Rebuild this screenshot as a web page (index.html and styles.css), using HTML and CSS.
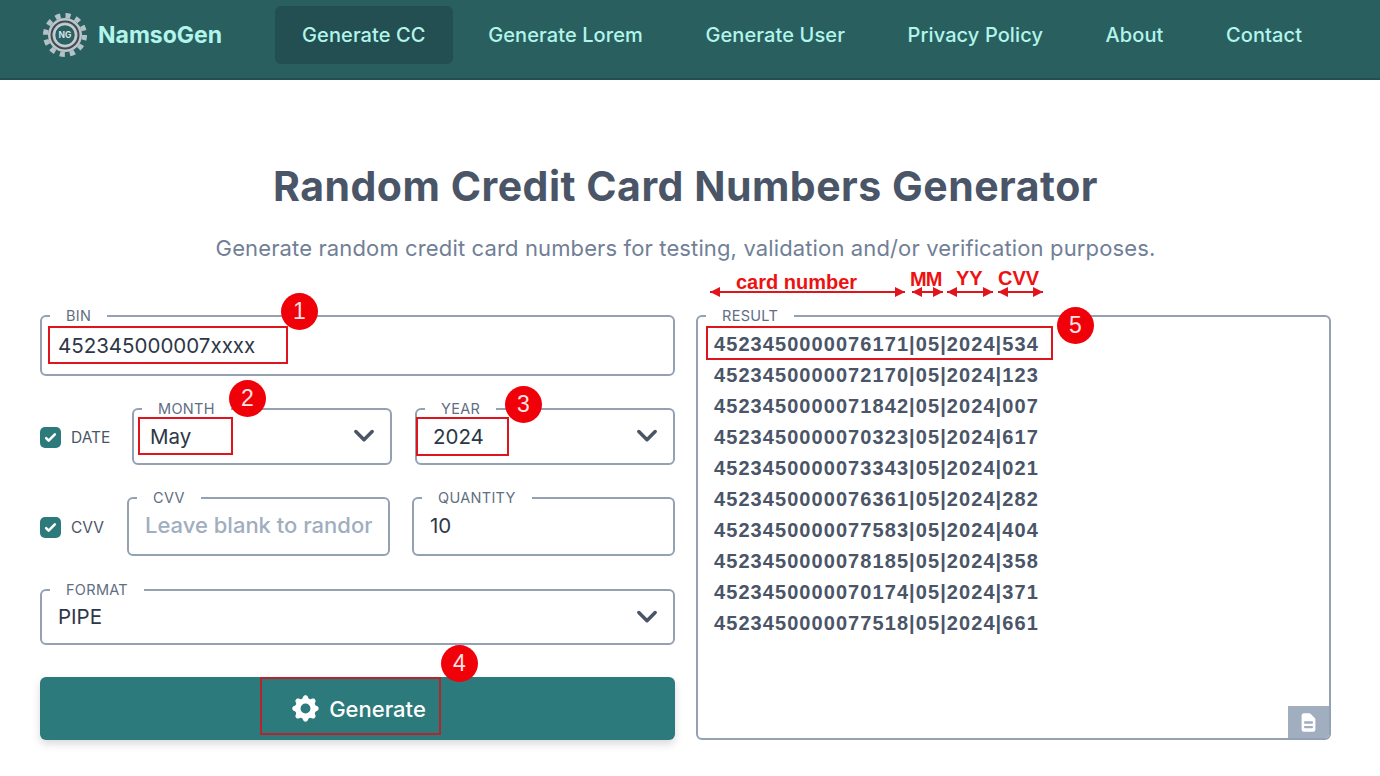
FILE: index.html
```html
<!DOCTYPE html>
<html lang="en">

<head>
    <meta charset="UTF-8" />
    <meta name="viewport" content="width=device-width, initial-scale=1.0" />
    <title>NamsoGen - Random Credit Card Numbers Generator</title>
    <link rel="stylesheet" href="styles.css">
</head>

<body>
    <header class="topbar">
        <a class="brand" href="#">
            <svg class="brand-logo" viewBox="0 0 48 48" aria-hidden="true">
                <circle cx="24" cy="24" r="19.5" fill="none" stroke="#b4c2c8" stroke-width="5" stroke-dasharray="5.1 5.1" />
                <circle cx="24" cy="24" r="17" fill="#b9c6cb" />
                <circle cx="24" cy="24" r="13.5" fill="#b9c6cb" stroke="#45484f" stroke-width="2" />
                <circle cx="24" cy="24" r="10.5" fill="#2b6062" stroke="#c3d0d4" stroke-width="1.5" />
                <text class="brand-logo-text" x="24" y="27.2" text-anchor="middle">NG</text>
            </svg>
            <span>NamsoGen</span>
        </a>
        <nav class="nav">
            <a class="nav-link active" href="#">Generate CC</a>
            <a class="nav-link" href="#">Generate Lorem</a>
            <a class="nav-link" href="#">Generate User</a>
            <a class="nav-link" href="#">Privacy Policy</a>
            <a class="nav-link" href="#">About</a>
            <a class="nav-link" href="#">Contact</a>
        </nav>
    </header>

    <main class="page">
        <h1>Random Credit Card Numbers Generator</h1>
        <p class="subtitle">Generate random credit card numbers for testing, validation and/or verification purposes.</p>

        <div class="columns">
            <form class="generator">
                <fieldset class="field field-text">
                    <legend>BIN</legend>
                    <input type="text" value="452345000007xxxx" />
                </fieldset>

                <div class="row row-date">
                    <label class="check">
                        <span class="check-box">
                            <svg viewBox="0 0 24 24"><path d="M5 13l4 4L19 7" /></svg>
                        </span>
                        DATE
                    </label>
                    <fieldset class="field field-select">
                        <legend>MONTH</legend>
                        <select>
                            <option>May</option>
                        </select>
                        <svg class="chevron" viewBox="0 0 24 24"><path d="M19 9l-7 7-7-7" /></svg>
                    </fieldset>
                    <fieldset class="field field-select">
                        <legend>YEAR</legend>
                        <select>
                            <option>2024</option>
                        </select>
                        <svg class="chevron" viewBox="0 0 24 24"><path d="M19 9l-7 7-7-7" /></svg>
                    </fieldset>
                </div>

                <div class="row row-cvv">
                    <label class="check">
                        <span class="check-box">
                            <svg viewBox="0 0 24 24"><path d="M5 13l4 4L19 7" /></svg>
                        </span>
                        CVV
                    </label>
                    <fieldset class="field field-text">
                        <legend>CVV</legend>
                        <input type="text" placeholder="Leave blank to randomize" />
                    </fieldset>
                    <fieldset class="field field-text">
                        <legend>QUANTITY</legend>
                        <input type="text" value="10" />
                    </fieldset>
                </div>

                <fieldset class="field field-select field-format">
                    <legend>FORMAT</legend>
                    <select>
                        <option>PIPE</option>
                    </select>
                    <svg class="chevron" viewBox="0 0 24 24"><path d="M19 9l-7 7-7-7" /></svg>
                </fieldset>

                <button class="generate" type="button">
                    <svg viewBox="0 0 20 20"><path fill-rule="evenodd" clip-rule="evenodd" d="M11.49 3.17c-.38-1.56-2.6-1.56-2.98 0a1.532 1.532 0 01-2.286.948c-1.372-.836-2.942.734-2.106 2.106.54.886.061 2.042-.947 2.287-1.561.379-1.561 2.6 0 2.978a1.532 1.532 0 01.947 2.287c-.836 1.372.734 2.942 2.106 2.106a1.532 1.532 0 012.287.947c.379 1.561 2.6 1.561 2.978 0a1.533 1.533 0 012.287-.947c1.372.836 2.942-.734 2.106-2.106a1.533 1.533 0 01.947-2.287c1.561-.379 1.561-2.6 0-2.978a1.532 1.532 0 01-.947-2.287c.836-1.372-.734-2.942-2.106-2.106a1.532 1.532 0 01-2.287-.947zM10 13a3 3 0 100-6 3 3 0 000 6z" /></svg>
                    Generate
                </button>
            </form>

            <fieldset class="field result">
                <legend>RESULT</legend>
                <textarea spellcheck="false">4523450000076171|05|2024|534
4523450000072170|05|2024|123
4523450000071842|05|2024|007
4523450000070323|05|2024|617
4523450000073343|05|2024|021
4523450000076361|05|2024|282
4523450000077583|05|2024|404
4523450000078185|05|2024|358
4523450000070174|05|2024|371
4523450000077518|05|2024|661</textarea>
                <button class="copy" type="button">
                    <svg viewBox="0 0 20 20"><path fill-rule="evenodd" clip-rule="evenodd" d="M4 4a2 2 0 012-2h4.586A2 2 0 0112 2.586L15.414 6A2 2 0 0116 7.414V16a2 2 0 01-2 2H6a2 2 0 01-2-2V4zm2 6a1 1 0 011-1h6a1 1 0 110 2H7a1 1 0 01-1-1zm1 3a1 1 0 100 2h6a1 1 0 100-2H7z" /></svg>
                </button>
            </fieldset>
        </div>
    </main>

    <!-- red markup drawn over the screenshot -->
    <div class="marks">
        <div class="box box-bin"></div>
        <div class="box box-month"></div>
        <div class="box box-year"></div>
        <div class="box box-generate"></div>
        <div class="box box-result"></div>
        <div class="dot dot-1">1</div>
        <div class="dot dot-2">2</div>
        <div class="dot dot-3">3</div>
        <div class="dot dot-4">4</div>
        <div class="dot dot-5">5</div>
        <div class="tag tag-card">card number</div>
        <div class="tag tag-mm">MM</div>
        <div class="tag tag-yy">YY</div>
        <div class="tag tag-cvv">CVV</div>
        <div class="arrow arrow-card"></div>
        <div class="arrow arrow-mm"></div>
        <div class="arrow arrow-yy"></div>
        <div class="arrow arrow-cvv"></div>
    </div>
</body>

</html>
```

FILE: styles.css
```css
* {
    box-sizing: border-box;
    margin: 0;
    padding: 0;
}

html,
body {
    height: 100%;
    overflow: hidden;
}

body {
    position: relative;
    background-color: #fff;
    color: #4a5568;
    font-family: 'Inter', 'Liberation Sans', sans-serif;
}

a {
    text-decoration: none;
}

.topbar {
    display: flex;
    align-items: flex-start;
    height: 80px;
    padding: 6px 0 0 41px;
    background-color: #2a5f60;
    border-bottom: 2px solid #234e52;
}

.brand {
    display: flex;
    align-items: center;
    gap: 9px;
    width: 234px;
    height: 58px;
    color: #b2f5ea;
    font-size: 23px;
    font-weight: 700;
}

.brand-logo {
    width: 48px;
    height: 48px;
    flex-shrink: 0;
}

.brand-logo-text {
    fill: #d5e4e6;
    font-size: 8.5px;
    font-weight: 700;
}

.nav {
    display: flex;
    gap: 8.5px;
}

.nav-link {
    display: flex;
    align-items: center;
    height: 58px;
    padding: 0 27px;
    border-radius: 6px;
    color: #b2f5ea;
    font-size: 20px;
    font-weight: 500;
    letter-spacing: 0.1px;
}

.nav-link.active {
    background-color: #234e52;
}

.page {
    padding: 83px 49px 0 40px;
}

h1 {
    color: #4a5568;
    font-size: 41px;
    font-weight: 700;
    letter-spacing: 0.5px;
    line-height: 46px;
    text-align: center;
}

.subtitle {
    margin-top: 24px;
    color: #718096;
    font-size: 22px;
    letter-spacing: 0.13px;
    line-height: 30px;
    text-align: center;
}

.columns {
    display: grid;
    grid-template-columns: 635px 635px;
    gap: 21px;
    margin-top: 45px;
}

.generator {
    display: flex;
    flex-direction: column;
    gap: 25px;
}

.field {
    position: relative;
    min-width: 0;
    border: 2px solid #94a1b2;
    border-radius: 6px;
    padding: 0 16px 8px;
}

.field legend {
    margin-left: -8px;
    padding: 0 16px;
    color: #5f6e82;
    font-size: 14.5px;
    letter-spacing: 0.3px;
    line-height: 16px;
}

.field input,
.field select {
    display: block;
    width: 100%;
    border: none;
    outline: none;
    background: transparent;
    color: #2d3748;
    font-family: inherit;
    font-size: 20.5px;
    appearance: none;
}

.field input::placeholder {
    color: #a0aec0;
    font-size: 22px;
    font-weight: 500;
    opacity: 1;
}

.field-text input {
    height: 42px;
}

.field-select {
    padding-bottom: 8px;
}

.field-select select {
    height: 38px;
}

.field-format {
    margin-top: 1px;
    padding-bottom: 9px;
}

.field-format select {
    height: 36px;
}

.chevron {
    position: absolute;
    top: 4px;
    right: 12px;
    width: 28px;
    height: 28px;
    fill: none;
    stroke: #4a5568;
    stroke-width: 3;
    stroke-linecap: round;
    stroke-linejoin: round;
}

.row {
    display: grid;
    align-items: center;
}

.row-date {
    grid-template-columns: 69px 260px 260px;
    column-gap: 23px;
}

.row-cvv {
    grid-template-columns: 65px 263px 263px;
    column-gap: 22px;
}

.row-cvv .field {
    padding-bottom: 10px;
}

.row-cvv input {
    height: 38px;
}

.check {
    display: flex;
    align-items: center;
    gap: 10px;
    margin-top: 8px;
    color: #4a5568;
    font-size: 15.5px;
}

.check-box {
    display: flex;
    align-items: center;
    justify-content: center;
    flex-shrink: 0;
    width: 21px;
    height: 21px;
    border-radius: 5px;
    background-color: #2c7a7b;
}

.check-box svg {
    width: 15px;
    height: 15px;
    fill: none;
    stroke: #fff;
    stroke-width: 4;
    stroke-linecap: round;
    stroke-linejoin: round;
}

.generate {
    display: flex;
    align-items: center;
    justify-content: center;
    gap: 7px;
    width: 100%;
    height: 63px;
    margin-top: 7px;
    border: none;
    border-radius: 6px;
    background-color: #2c7a7b;
    box-shadow: 0 4px 8px rgba(0, 0, 0, 0.15);
    color: #fff;
    font-family: inherit;
    font-size: 22px;
    font-weight: 500;
    cursor: pointer;
}

.generate svg {
    width: 33px;
    height: 33px;
    fill: #fff;
}

.result {
    height: 432px;
    padding: 0;
}

.result legend {
    margin-left: 8px;
}

.result textarea {
    display: block;
    width: 100%;
    height: 414px;
    padding: 5px 16px;
    border: none;
    outline: none;
    resize: none;
    overflow: hidden;
    background: transparent;
    color: #4a5568;
    font-family: 'Liberation Sans', sans-serif;
    font-size: 20px;
    font-weight: 700;
    letter-spacing: 1.07px;
    line-height: 31px;
}

.copy {
    position: absolute;
    right: 0;
    bottom: 0;
    display: flex;
    align-items: center;
    justify-content: center;
    width: 41px;
    height: 32px;
    border: none;
    border-radius: 0 0 4px 0;
    background-color: #a0aec0;
}

.copy svg {
    width: 23px;
    height: 23px;
    fill: #fff;
}

/* markup layer */
.marks {
    position: absolute;
    inset: 0;
    pointer-events: none;
}

.box {
    position: absolute;
    border: 2px solid #e0141c;
}

.box-bin {
    left: 48px;
    top: 326px;
    width: 240px;
    height: 38px;
}

.box-month {
    left: 138px;
    top: 417px;
    width: 95px;
    height: 38px;
}

.box-year {
    left: 416px;
    top: 417px;
    width: 93px;
    height: 39px;
}

.box-generate {
    left: 260px;
    top: 677px;
    width: 181px;
    height: 58px;
    border-color: #b5252b;
}

.box-result {
    left: 706px;
    top: 326px;
    width: 347px;
    height: 34px;
}

.dot {
    position: absolute;
    width: 37px;
    height: 37px;
    border-radius: 50%;
    background-color: #f00008;
    color: #ffe3e3;
    font-family: 'Liberation Sans', sans-serif;
    font-size: 23px;
    line-height: 37px;
    text-align: center;
}

.dot-1 {
    left: 281px;
    top: 293px;
}

.dot-2 {
    left: 229px;
    top: 380px;
}

.dot-3 {
    left: 505px;
    top: 386px;
}

.dot-4 {
    left: 441px;
    top: 645px;
}

.dot-5 {
    left: 1057px;
    top: 307px;
}

.tag {
    position: absolute;
    color: #ee1111;
    font-family: 'Liberation Sans', sans-serif;
    font-size: 20px;
    font-weight: 700;
    line-height: 24px;
    white-space: nowrap;
}

.tag-card {
    left: 736px;
    top: 270px;
}

.tag-mm {
    left: 910px;
    top: 267px;
    letter-spacing: -1px;
}

.tag-yy {
    left: 956px;
    top: 266px;
}

.tag-cvv {
    left: 998px;
    top: 266px;
}

/* double headed arrows */
.arrow {
    position: absolute;
    top: 291px;
    height: 2px;
    background-color: #e0141c;
}

.arrow::before,
.arrow::after {
    content: '';
    position: absolute;
    top: -4px;
    border-top: 5px solid transparent;
    border-bottom: 5px solid transparent;
}

.arrow::before {
    left: 0;
    border-right: 10px solid #e0141c;
}

.arrow::after {
    right: 0;
    border-left: 10px solid #e0141c;
}

.arrow-card {
    left: 710px;
    width: 195px;
}

.arrow-mm {
    left: 912px;
    width: 31px;
}

.arrow-yy {
    left: 947px;
    width: 46px;
}

.arrow-cvv {
    left: 998px;
    width: 45px;
}
```
